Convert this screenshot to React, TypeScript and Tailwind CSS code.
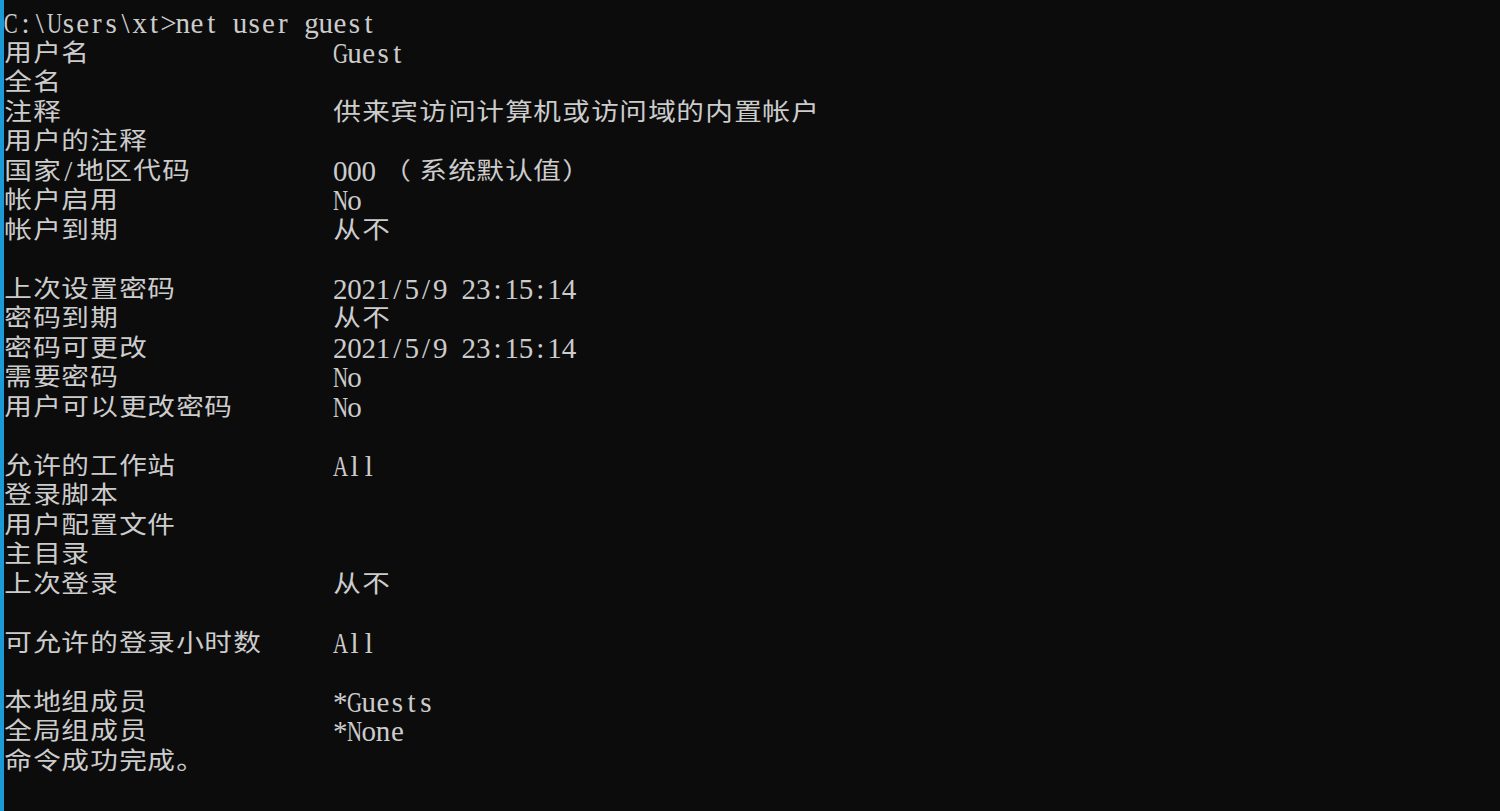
import React from 'react';

type Line = { label?: string; value?: string; full?: string };

const LINES: Line[] = [
  { full: 'C:\\Users\\xt>net user guest' },
  { label: '用户名', value: 'Guest' },
  { label: '全名', value: '' },
  { label: '注释', value: '供来宾访问计算机或访问域的内置帐户' },
  { label: '用户的注释', value: '' },
  { label: '国家/地区代码', value: '000 （系统默认值）' },
  { label: '帐户启用', value: 'No' },
  { label: '帐户到期', value: '从不' },
  {},
  { label: '上次设置密码', value: '2021/5/9 23:15:14' },
  { label: '密码到期', value: '从不' },
  { label: '密码可更改', value: '2021/5/9 23:15:14' },
  { label: '需要密码', value: 'No' },
  { label: '用户可以更改密码', value: 'No' },
  {},
  { label: '允许的工作站', value: 'All' },
  { label: '登录脚本', value: '' },
  { label: '用户配置文件', value: '' },
  { label: '主目录', value: '' },
  { label: '上次登录', value: '从不' },
  {},
  { label: '可允许的登录小时数', value: 'All' },
  {},
  { label: '本地组成员', value: '*Guests' },
  { label: '全局组成员', value: '*None' },
  { full: '命令成功完成。' },
];

// one console cell per character: half width for ascii, full width for CJK
const Glyph: React.FC<{ ch: string }> = ({ ch }) => {
  if (ch === ' ') return <span className="inline-flex h-[29.5px] w-[14.3px] align-top">&nbsp;</span>;
  if (ch === '（') {
    return (
      <span className="inline-flex h-[29.5px] w-[28.6px] justify-center align-top font-['Noto_Sans_CJK_SC',sans-serif] text-[24px] leading-[24px]">
        <span className="inline-block -translate-x-[7px] scale-x-[1.15]">{ch}</span>
      </span>
    );
  }
  if (ch.charCodeAt(0) > 0x7f) {
    return (
      <span className="inline-flex h-[29.5px] w-[28.6px] justify-center align-top font-['Noto_Sans_CJK_SC',sans-serif] text-[24px] leading-[24px]">
        <span className="inline-block scale-x-[1.15]">{ch}</span>
      </span>
    );
  }
  if (/[A-Z]/.test(ch)) {
    return (
      <span className="inline-flex h-[29.5px] w-[14.3px] justify-center align-top">
        <span className="inline-block scale-x-[0.72]">{ch}</span>
      </span>
    );
  }
  return <span className="inline-flex h-[29.5px] w-[14.3px] justify-center align-top">{ch}</span>;
};

const Text: React.FC<{ text: string }> = ({ text }) => (
  <>
    {Array.from(text).map((ch, i) => (
      <Glyph key={i} ch={ch} />
    ))}
  </>
);

export default function App() {
  return (
    <div className="flex h-screen w-full overflow-hidden bg-[#0c0c0c]">
      <div className="w-[4px] shrink-0 bg-[#1c9ad6]" />
      <div className="flex-1 pt-[9px] font-['Liberation_Serif',serif] text-[29px] text-[#cccccc]">
        {LINES.map((line, i) => (
          <div key={i} className="flex h-[29.5px] whitespace-nowrap leading-[29.5px]">
            {line.full !== undefined ? (
              <div>
                <Text text={line.full} />
              </div>
            ) : line.label !== undefined ? (
              <>
                <div className="w-[329px] shrink-0">
                  <Text text={line.label} />
                </div>
                <div>
                  <Text text={line.value ?? ''} />
                </div>
              </>
            ) : null}
          </div>
        ))}
      </div>
    </div>
  );
}
